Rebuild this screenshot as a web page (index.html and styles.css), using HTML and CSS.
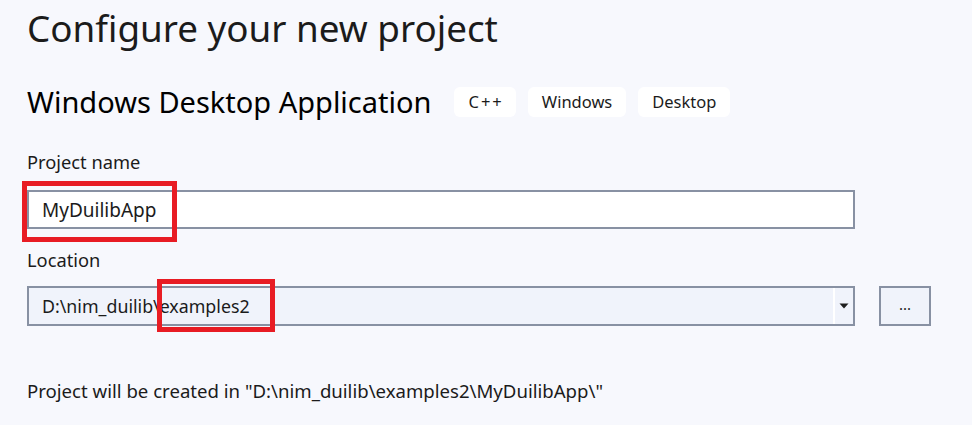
FILE: index.html
```html
<!DOCTYPE html>
<html lang="en">
<head>
<meta charset="utf-8">
<title>Configure your new project</title>
<link rel="stylesheet" href="styles.css">
</head>
<body>
<main class="page">
  <h1 class="title">Configure your new project</h1>
  <div class="template-row">
    <h2 class="template-name">Windows Desktop Application</h2>
    <ul class="tags">
      <li class="tag tag-lang">C++</li>
      <li class="tag">Windows</li>
      <li class="tag">Desktop</li>
    </ul>
  </div>

  <label class="field-label" for="pname">Project name</label>
  <div class="field-row field-row-name">
    <div class="textbox">
      <span class="textbox-value" id="pname">MyDuilibApp</span>
      <span class="mark mark-name"></span>
    </div>
  </div>

  <label class="field-label field-label-loc" for="ploc">Location</label>
  <div class="field-row field-row-loc">
    <div class="combo">
      <span class="combo-value" id="ploc">D:\nim_duilib\examples2</span>
      <span class="combo-arrow">
        <svg width="10" height="6" viewBox="0 0 10 6"><path d="M0.5 0.5h9L5 5.5z" fill="#1e1e1e"/></svg>
      </span>
      <span class="mark mark-loc"></span>
    </div>
    <button class="browse" type="button">...</button>
  </div>

  <p class="result">Project will be created in "D:\nim_duilib\examples2\MyDuilibApp\"</p>
</main>
</body>
</html>
```
FILE: styles.css
```css
html, body {
  margin: 0;
  padding: 0;
  background: #f7f8fd;
}
body {
  font-family: "Noto Sans", "Open Sans", sans-serif;
  color: #1b1b1b;
  width: 972px;
  height: 425px;
  overflow: hidden;
}
.page {
  padding: 0 0 0 27px;
}
.title {
  margin: 0;
  padding-top: 4px;
  font-size: 36.8px;
  font-weight: 400;
  line-height: 48px;
  color: #1b1b1b;
}
.template-row {
  display: flex;
  align-items: center;
  margin-top: 35px;
  height: 30px;
}
.template-name {
  margin: 0;
  font-size: 29px;
  font-weight: 400;
  line-height: 30px;
  color: #000;
}
.tags {
  display: flex;
  gap: 12px;
  list-style: none;
  margin: 0 0 0 23px;
  padding: 0;
}
.tag {
  background: #fff;
  border-radius: 6px;
  height: 30px;
  line-height: 30px;
  padding: 0 14px;
  font-size: 16.5px;
  color: #1b1b1b;
}
.tag-lang {
  letter-spacing: 2px;
  padding: 0 12px 0 14px;
}
.field-label {
  display: block;
  margin-top: 34px;
  font-size: 18.3px;
  line-height: 22px;
  color: #1b1b1b;
}
.field-label-loc {
  margin-top: 20px;
}
.field-row {
  display: flex;
  align-items: center;
  gap: 24px;
}
.field-row-name {
  margin-top: 17px;
}
.field-row-loc {
  margin-top: 15px;
}
.textbox {
  position: relative;
  box-sizing: border-box;
  width: 828px;
  height: 39px;
  border: 2px solid #8891a3;
  background: #fff;
  display: flex;
  align-items: center;
  padding-left: 13px;
}
.textbox-value {
  font-size: 19px;
  color: #1b1b1b;
}
.combo {
  position: relative;
  box-sizing: border-box;
  width: 828px;
  height: 40px;
  border: 2px solid #8891a3;
  background: #f0f3fb;
  display: flex;
  align-items: center;
  padding-left: 13px;
}
.combo-value {
  flex: 1;
  font-size: 17.8px;
  color: #1b1b1b;
}
.combo-arrow {
  box-sizing: border-box;
  width: 20px;
  height: 100%;
  border-left: 2px solid #ffffff;
  display: flex;
  align-items: center;
  justify-content: center;
}
.browse {
  box-sizing: border-box;
  width: 52px;
  height: 40px;
  border: 2px solid #8891a3;
  background: #f0f3fb;
  font-family: inherit;
  font-size: 15px;
  color: #1b1b1b;
  padding: 0 0 4px;
}
.mark {
  position: absolute;
  border: 5px solid #e81c24;
  box-sizing: border-box;
}
.mark-name {
  left: -7px;
  top: -11px;
  width: 155px;
  height: 61px;
}
.mark-loc {
  left: 128px;
  top: -9px;
  width: 118px;
  height: 53px;
}
.result {
  margin: 54px 0 0;
  font-size: 18.6px;
  line-height: 22px;
  color: #1b1b1b;
}
```
